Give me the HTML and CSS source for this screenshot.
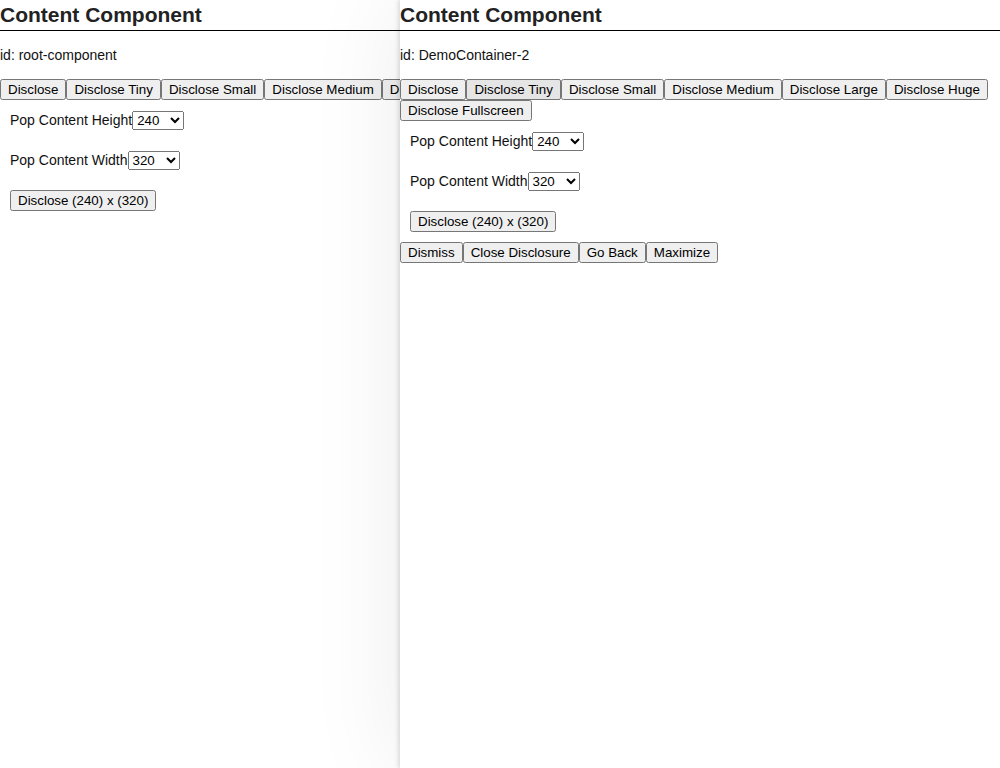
FILE: index.html
```
<!DOCTYPE html>
<html>
<head>
<meta charset="utf-8">
<link rel="stylesheet" href="styles.css">
</head>
<body>
<div class="component root">
  <h2 class="title">Content Component</h2>
  <p class="ident">id: root-component</p>
  <div class="btn-row"><button>Disclose</button><button>Disclose Tiny</button><button>Disclose Small</button><button>Disclose Medium</button><button>Disclose Large</button><button>Disclose Huge</button><button>Disclose Fullscreen</button></div>
  <div class="field"><label>Pop Content Height</label><select><option>240</option><option>320</option><option>480</option></select></div>
  <div class="field"><label>Pop Content Width</label><select><option>320</option><option>240</option><option>480</option></select></div>
  <div class="field"><button>Disclose (240) x (320)</button></div>
</div>
<div class="component overlay">
  <h2 class="title">Content Component</h2>
  <p class="ident">id: DemoContainer-2</p>
  <div class="btn-row"><button>Disclose</button><button class="active">Disclose Tiny</button><button>Disclose Small</button><button>Disclose Medium</button><button>Disclose Large</button><button>Disclose Huge</button><button>Disclose Fullscreen</button></div>
  <div class="field"><label>Pop Content Height</label><select><option>240</option><option>320</option><option>480</option></select></div>
  <div class="field"><label>Pop Content Width</label><select><option>320</option><option>240</option><option>480</option></select></div>
  <div class="field"><button>Disclose (240) x (320)</button></div>
  <div class="btn-row"><button>Dismiss</button><button>Close Disclosure</button><button>Go Back</button><button>Maximize</button></div>
</div>
</body>
</html>
```
FILE: styles.css
```
html, body {
  margin: 0;
  padding: 0;
  background: #fff;
}
body {
  font-family: "Liberation Sans", Arial, sans-serif;
  font-size: 14px;
  color: #111;
  position: relative;
  width: 1000px;
  height: 768px;
  overflow: hidden;
}
.component {
  background: #fff;
}
.root {
  width: 1000px;
  height: 768px;
}
.overlay {
  position: absolute;
  left: 400px;
  top: 0;
  width: 600px;
  height: 768px;
  box-shadow: -2px 0 4px rgba(0, 0, 0, 0.12), 0 0 90px rgba(0, 0, 0, 0.08);
}
.title {
  margin: 0;
  font-size: 21px;
  line-height: 30px;
  font-weight: bold;
  color: #222;
  border-bottom: 1px solid #000;
}
.ident {
  margin: 14px 0;
  line-height: 20px;
}
.btn-row {
  display: flex;
  flex-wrap: wrap;
}
button {
  font-family: "Liberation Sans", Arial, sans-serif;
  font-size: 13.333px;
  margin: 0;
}
button.active {
  background-color: #e5e5e5;
  border: 1px solid #767676;
  border-radius: 2px;
  padding: 2px 7px;
  color: #000;
}
.field {
  display: flex;
  align-items: center;
  padding: 10px;
  min-height: 20px;
  white-space: nowrap;
}
select {
  font-family: "Liberation Sans", Arial, sans-serif;
  font-size: 13.333px;
  width: 52px;
  margin: 0;
}
```
